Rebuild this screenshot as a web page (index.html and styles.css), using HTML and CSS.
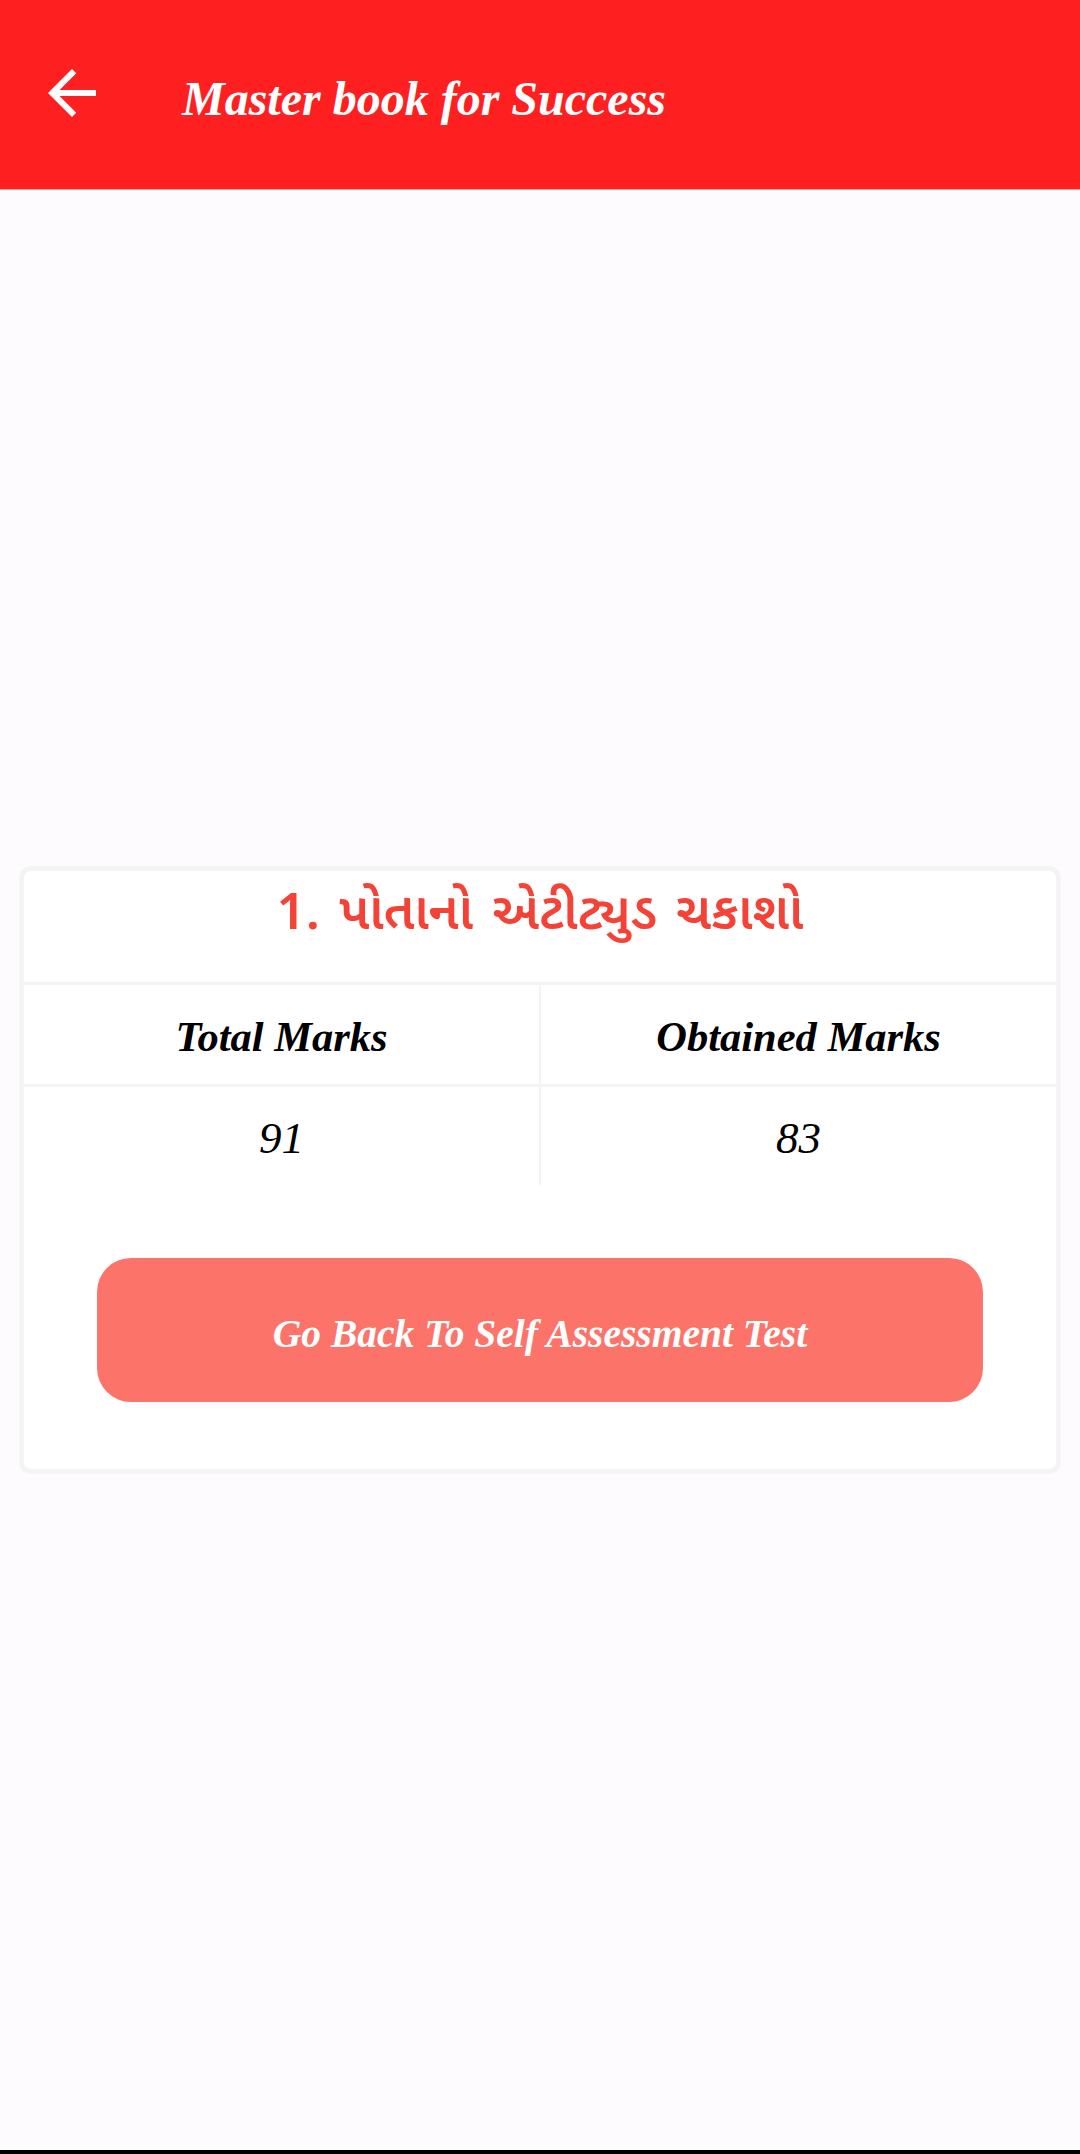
FILE: index.html
```html
<!DOCTYPE html>
<html lang="gu">
<head>
    <meta charset="UTF-8">
    <meta name="viewport" content="width=device-width, initial-scale=1.0">
    <title>Master book for Success</title>
    <link rel="stylesheet" href="styles.css">
</head>
<body>
    <header class="app-bar">
        <a class="back" href="#">
            <svg viewBox="0 0 24 24" width="72" height="72"><path fill="#fff" d="M20 11H7.83l5.59-5.59L12 4l-8 8 8 8 1.41-1.41L7.83 13H20v-2z"/></svg>
        </a>
        <h1 class="app-title">Master book for Success</h1>
    </header>

    <main class="content">
        <section class="card">
            <h2 class="test-name">1. પોતાનો એટીટ્યુડ ચકાશો</h2>
            <div class="row">
                <div class="cell head">Total Marks</div>
                <div class="cell head">Obtained Marks</div>
            </div>
            <div class="row">
                <div class="cell value">91</div>
                <div class="cell value">83</div>
            </div>
            <a class="go-back" href="#">Go Back To Self Assessment Test</a>
        </section>
    </main>

    <div class="nav-line"></div>
</body>
</html>
```

FILE: styles.css
```css
* {
    margin: 0;
    padding: 0;
    box-sizing: border-box;
}
html,
body {
    height: 2154px;
}
body {
    display: flex;
    flex-direction: column;
    background-color: #fdfbfe;
    font-family: "Liberation Serif", "Noto Sans Gujarati", serif;
}
.app-bar {
    height: 190px;
    flex: none;
    display: flex;
    align-items: center;
    gap: 74px;
    padding: 0 0 3px 36px;
    background-color: #fe1f21;
    border-bottom: 1px solid #e8a0a0;
}
.back {
    display: flex;
}
.app-title {
    padding-top: 10px;
    color: #fff;
    font-size: 48px;
    font-style: italic;
    font-weight: bold;
}
.content {
    flex: 1;
    display: flex;
    align-items: center;
    padding: 0 19px;
}
.card {
    width: 100%;
    height: 608px;
    background-color: #fff;
    border: 5px solid #f4f4f5;
    border-radius: 12px;
}
.test-name {
    height: 114px;
    padding-top: 12px;
    border-bottom: 3px solid #f4f4f4;
    color: #f44336;
    font-family: "Noto Sans Gujarati", "Noto Sans", sans-serif;
    font-size: 51px;
    font-weight: 600;
    word-spacing: 6px;
    text-align: center;
}
.row {
    display: flex;
    height: 102px;
    border-bottom: 3px solid #f4f4f4;
}
.row + .row {
    height: 98px;
    border-bottom: 0;
}
.cell {
    flex: 1;
    display: flex;
    align-items: center;
    justify-content: center;
    padding-top: 4px;
    color: #000;
    font-style: italic;
}
.cell:first-child {
    border-right: 2px solid #f4f4f4;
}
.head {
    font-size: 42.5px;
    font-weight: bold;
}
.value {
    font-size: 45px;
}
.go-back {
    display: flex;
    align-items: center;
    justify-content: center;
    height: 144px;
    margin: 73px 73px 0;
    padding-top: 8px;
    border-radius: 34px;
    background-color: #fc7369;
    color: #fff;
    font-size: 39.5px;
    font-style: italic;
    font-weight: bold;
    text-decoration: none;
}
.nav-line {
    height: 4px;
    flex: none;
    background-color: #000;
}
```
